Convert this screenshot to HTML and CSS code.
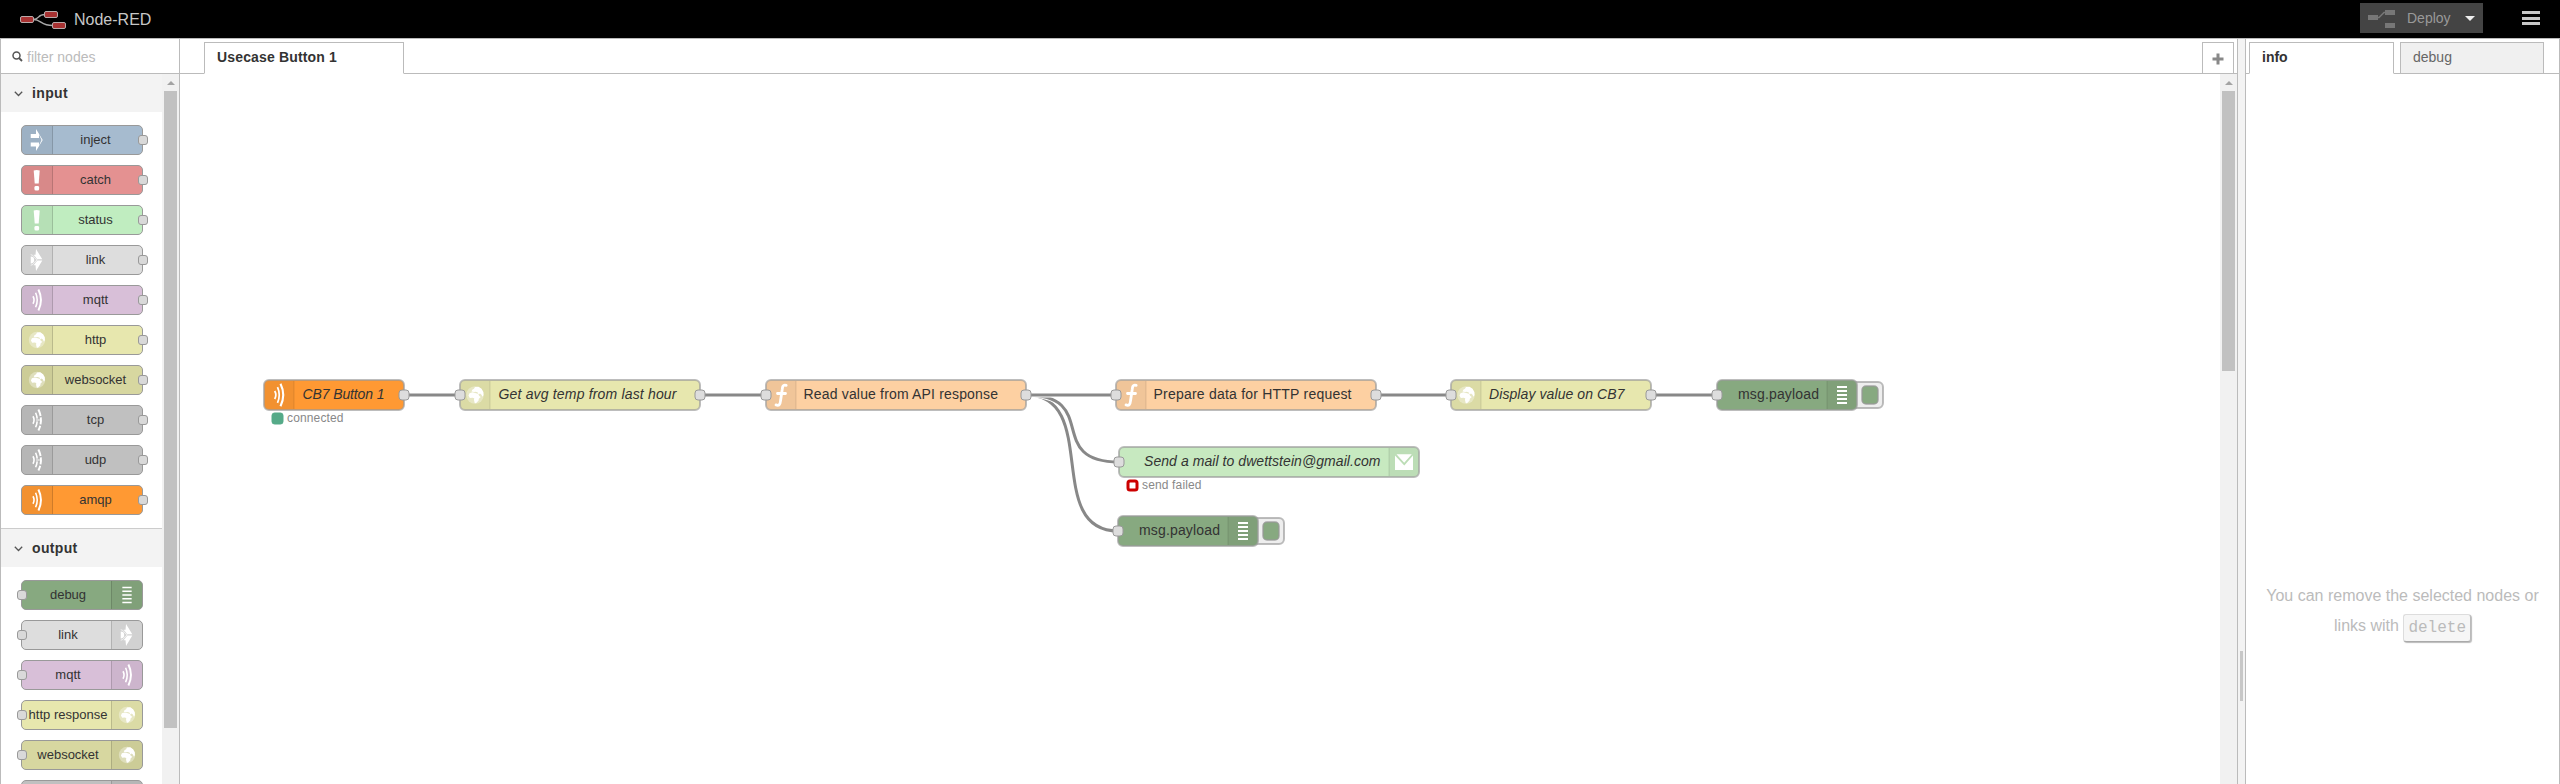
FILE: index.html
```html
<!DOCTYPE html>
<html lang="en">
<head>
<meta charset="utf-8">
<title>Node-RED</title>
<link rel="stylesheet" href="styles.css">
</head>
<body>
<svg class="defs" width="0" height="0">
  <symbol id="i-inject" viewBox="0 0 30 30"><path transform="translate(-2.100 -1.100) scale(1.070)" fill="#fff" d="M9.700 9H15V4L21.700 15L15 26V21.500H9.700V17.500H18V20.500L20.500 15L18 9.500V13H9.700Z"/></symbol>
  <symbol id="i-alert" viewBox="0 0 30 30"><g transform="translate(-1.900 -1.100) scale(1.070)"><path fill="#fff" d="M12.500 5.500Q15.500 4.500 18.500 5.500L17.500 18.500H13.500Z"/><rect x="13.200" y="21" width="4.700" height="4.500" rx="1.500" fill="#fff"/></g></symbol>
  <symbol id="i-link" viewBox="0 0 30 30"><g transform="translate(-2.100 -1.100) scale(1.070)"><path fill="#fff" d="M15 4L21.300 14.400H17C15 14 14.700 11.500 12.500 9.700H14.500ZM15 26L21.300 15.600H17C15 16 14.700 18.500 12.500 20.300H14.500ZM9.700 11.500A3.500 3.500 0 0 1 9.700 18.500Z"/><path d="M9.700 9.700C13 9.500 13.500 14.500 16.500 15C13.500 15.500 13 20.500 9.700 20.300" fill="none" stroke="#fff" stroke-width=".7"/></g></symbol>
  <symbol id="i-wave" viewBox="0 0 30 30"><g fill="none" stroke="#fff" stroke-width="1.700"><path stroke-width="2.100" d="M16.500 3.800Q22 15 16.500 26.200"/><path d="M13.500 7.200Q17 15 13.500 22.800"/><path d="M10.700 11Q13 15 10.700 19"/></g></symbol>
  <symbol id="i-bridge" viewBox="0 0 30 30"><g fill="none" stroke="#fff" stroke-width="1.700"><path stroke-width="2.100" stroke-dasharray="7.300 1.500 7.500 1.500 7.300" d="M16.500 3.800Q22 15 16.500 26.200"/><path stroke-dasharray="6.500 3 7" d="M13.500 7.200Q17 15 13.500 22.800"/><path d="M10.700 11Q13 15 10.700 19"/><path stroke-width="1.200" d="M14 15H18"/></g></symbol>
  <symbol id="i-globe" viewBox="0 0 30 30"><circle cx="15" cy="15" r="8.800" fill="#fff" opacity=".35"/><path fill="#fff" d="M11.500 11.500L12.300 9.800L14 8.800L15 7L18.500 6.700L21.500 8.800L23.300 12L23.500 15L22.500 16.800L21.300 14.500L20 13.500L18.500 14.500L17.500 12.300L15.500 11.700L14 12Z"/><path fill="#fff" d="M8.500 15.500L9.500 13.200L12.500 12.300L16 13.200L18 13.800L19.300 16L20.800 17L18.800 18.800L18.600 20.500L16 23.300L14.700 23L14 20L14.200 18.300L12.500 17.700L9.800 18Z"/></symbol>
  <symbol id="i-debug" viewBox="0 0 30 30"><path d="M10 7h10M10 11h10M10 15h10M10 19h10M10 23h10" stroke="#fff" stroke-width="1.800"/></symbol>
  <symbol id="i-function" viewBox="0 0 30 30"><path d="M20.200 5.300C16.800 4.300 16.500 6.600 16.200 9.500L14.500 21C14.200 25 12.700 25.900 10 24.900M11.500 13.500H19.500" fill="none" stroke="#fff" stroke-width="2.800" stroke-linecap="round"/></symbol>
  <symbol id="i-mail" viewBox="0 0 30 30"><path fill="#fff" d="M6 8.500V23H24V8.500L15.300 18.500ZM7.500 7.200H22.800L15.200 15.800Z"/></symbol>
</svg>

<header class="header">
  <svg class="logo" width="46" height="18" viewBox="0 0 46 18"><path d="M13 8.500C20 8.500 17 3.500 25 3.500M13 8.500C22 8.500 20 14.500 33 14.500" fill="none" stroke="#aaa" stroke-width="1.400"/><g fill="#a83232" stroke="#b9aaaa" stroke-width="1"><rect x=".5" y="5.500" width="13" height="6" rx="1.500"/><rect x="24.500" y=".5" width="13" height="6" rx="1.500"/><rect x="32.500" y="11.500" width="13" height="6" rx="1.500"/></g></svg>
  <span class="brand">Node-RED</span>
  <div class="deploy">
    <svg width="27" height="18" viewBox="0 0 27 18"><path d="M9 7.500H11L16 2.500H18" fill="none" stroke="#777" stroke-width="1.500"/><path fill="#777" d="M0 5h10v5H0zM17 0h10v5H17zM17 13h10v5H17z"/></svg>
    <span class="deploy-text">Deploy</span>
    <span class="caret"></span>
  </div>
  <div class="menu"><i></i><i></i><i></i></div>
</header>

<main class="main">
  <aside class="palette">
    <div class="search"><svg width="11" height="11" viewBox="0 0 11 11"><circle cx="4.500" cy="4.500" r="3.500" fill="none" stroke="#555" stroke-width="1.500"/><path d="M7 7L10 10" stroke="#555" stroke-width="1.800"/></svg><span>filter nodes</span></div>
    <div class="palette-body">
      <div class="categories">
        <section class="category">
          <h2><svg width="9" height="6" viewBox="0 0 9 6"><path d="M.8.800L4.500 4.500L8.200.8" fill="none" stroke="#555" stroke-width="1.300"/></svg>input</h2>
          <div class="nodes">
            <div class="node in inject"><svg><use href="#i-inject"/></svg><span>inject</span></div>
            <div class="node in catch"><svg><use href="#i-alert"/></svg><span>catch</span></div>
            <div class="node in status"><svg><use href="#i-alert"/></svg><span>status</span></div>
            <div class="node in link"><svg><use href="#i-link"/></svg><span>link</span></div>
            <div class="node in mqtt"><svg><use href="#i-wave"/></svg><span>mqtt</span></div>
            <div class="node in http"><svg><use href="#i-globe"/></svg><span>http</span></div>
            <div class="node in websocket"><svg><use href="#i-globe"/></svg><span>websocket</span></div>
            <div class="node in tcp"><svg><use href="#i-bridge"/></svg><span>tcp</span></div>
            <div class="node in tcp"><svg><use href="#i-bridge"/></svg><span>udp</span></div>
            <div class="node in amqp"><svg><use href="#i-wave"/></svg><span>amqp</span></div>
          </div>
        </section>
        <section class="category">
          <h2><svg width="9" height="6" viewBox="0 0 9 6"><path d="M.8.800L4.500 4.500L8.200.8" fill="none" stroke="#555" stroke-width="1.300"/></svg>output</h2>
          <div class="nodes">
            <div class="node out debug"><svg><use href="#i-debug"/></svg><span>debug</span></div>
            <div class="node out link"><svg><use href="#i-link"/></svg><span>link</span></div>
            <div class="node out mqtt"><svg><use href="#i-wave"/></svg><span>mqtt</span></div>
            <div class="node out http"><svg><use href="#i-globe"/></svg><span>http response</span></div>
            <div class="node out websocket"><svg><use href="#i-globe"/></svg><span>websocket</span></div>
            <div class="node out tcp"><svg><use href="#i-bridge"/></svg><span></span></div>
          </div>
        </section>
      </div>
      <div class="scrollbar"><b></b><i class="thumb palette-thumb"></i></div>
    </div>
  </aside>

  <section class="workspace">
    <div class="tabs ws-tabs">
      <div class="tab active ws-tab">Usecase Button 1</div>
      <div class="add"><svg width="12" height="12" viewBox="0 0 12 12"><path d="M6 .5V11.500M.5 6H11.500" stroke="#888" stroke-width="3"/></svg></div>
    </div>
    <div class="ws-body">
      <svg class="chart" width="2040" height="710" viewBox="180 74 2040 710">
        <path class="wire-back" d="M1026 395C1101 395 1043 531 1118 531"/>
        <path class="wire" d="M1026 395C1101 395 1043 531 1118 531"/>
        <path class="wire-back" d="M1026 395C1101 395 1044 462 1119 462"/>
        <path class="wire" d="M1026 395C1101 395 1044 462 1119 462"/>
        <path class="wire-back" d="M404 395H460M700 395H766M1026 395H1116M1376 395H1451M1651 395H1717"/>
        <path class="wire" d="M404 395H460M700 395H766M1026 395H1116M1376 395H1451M1651 395H1717"/>

        <g transform="translate(264 380)">
          <rect class="box" width="140" height="30" rx="5" fill="#ff9933"/>
          <path class="shade" d="M5 1H30V29H5Q1 29 1 25V5Q1 1 5 1Z"/><path class="divider" d="M30 1V29"/>
          <use href="#i-wave" width="30" height="30"/>
          <text class="label italic" x="38.500" y="19" textLength="82">CB7 Button 1</text>
          <rect class="port" x="135" y="10" width="10" height="10" rx="3"/>
          <rect x="8" y="33" width="11" height="11" rx="2.500" fill="#5a8" stroke="#5a8"/>
          <text class="state" x="23" y="42" textLength="56.500">connected</text>
        </g>
        <g transform="translate(460 380)">
          <rect class="box" width="240" height="30" rx="5" fill="#e7e7ae"/>
          <path class="shade" d="M5 1H30V29H5Q1 29 1 25V5Q1 1 5 1Z"/><path class="divider" d="M30 1V29"/>
          <use href="#i-globe" width="30" height="30"/>
          <text class="label italic" x="38.500" y="19" textLength="178">Get avg temp from last hour</text>
          <rect class="port" x="-5" y="10" width="10" height="10" rx="3"/><rect class="port" x="235" y="10" width="10" height="10" rx="3"/>
        </g>
        <g transform="translate(766 380)">
          <rect class="box" width="260" height="30" rx="5" fill="#fdd0a2"/>
          <path class="shade" d="M5 1H30V29H5Q1 29 1 25V5Q1 1 5 1Z"/><path class="divider" d="M30 1V29"/>
          <use href="#i-function" width="30" height="30"/>
          <text class="label" x="37.500" y="19" textLength="194.500">Read value from API response</text>
          <rect class="port" x="-5" y="10" width="10" height="10" rx="3"/><rect class="port" x="255" y="10" width="10" height="10" rx="3"/>
        </g>
        <g transform="translate(1116 380)">
          <rect class="box" width="260" height="30" rx="5" fill="#fdd0a2"/>
          <path class="shade" d="M5 1H30V29H5Q1 29 1 25V5Q1 1 5 1Z"/><path class="divider" d="M30 1V29"/>
          <use href="#i-function" width="30" height="30"/>
          <text class="label" x="37.500" y="19" textLength="198">Prepare data for HTTP request</text>
          <rect class="port" x="-5" y="10" width="10" height="10" rx="3"/><rect class="port" x="255" y="10" width="10" height="10" rx="3"/>
        </g>
        <g transform="translate(1451 380)">
          <rect class="box" width="200" height="30" rx="5" fill="#e7e7ae"/>
          <path class="shade" d="M5 1H30V29H5Q1 29 1 25V5Q1 1 5 1Z"/><path class="divider" d="M30 1V29"/>
          <use href="#i-globe" width="30" height="30"/>
          <text class="label italic" x="38" y="19" textLength="135.500">Display value on CB7</text>
          <rect class="port" x="-5" y="10" width="10" height="10" rx="3"/><rect class="port" x="195" y="10" width="10" height="10" rx="3"/>
        </g>
        <g transform="translate(1119 447)">
          <rect class="box" width="300" height="30" rx="5" fill="#c7e9c0"/>
          <path class="shade" d="M270 1H295Q299 1 299 5V25Q299 29 295 29H270Z"/><path class="divider" d="M270 1V29"/>
          <use href="#i-mail" x="270" width="30" height="30"/>
          <text class="label italic" x="25" y="19" textLength="236.500">Send a mail to dwettstein@gmail.com</text>
          <rect class="port" x="-5" y="10" width="10" height="10" rx="3"/>
          <rect x="9" y="34" width="9" height="9" rx="2" fill="#fff" stroke="#c00" stroke-width="3"/>
          <text class="state" x="23" y="42" textLength="59.500">send failed</text>
        </g>
        <g transform="translate(1717 380)">
          <rect class="button" x="120" y="2" width="46" height="26" rx="5"/>
          <rect class="button-inner" x="145" y="6" width="16" height="18" rx="4"/>
          <rect class="box" width="140" height="30" rx="5" fill="#87a980"/>
          <path class="shade" d="M110 1H135Q139 1 139 5V25Q139 29 135 29H110Z"/><path class="divider" d="M110 1V29"/>
          <use href="#i-debug" x="110" width="30" height="30"/>
          <text class="label" x="21" y="19" textLength="81">msg.payload</text>
          <rect class="port" x="-5" y="10" width="10" height="10" rx="3"/>
        </g>
        <g transform="translate(1118 516)">
          <rect class="button" x="120" y="2" width="46" height="26" rx="5"/>
          <rect class="button-inner" x="145" y="6" width="16" height="18" rx="4"/>
          <rect class="box" width="140" height="30" rx="5" fill="#87a980"/>
          <path class="shade" d="M110 1H135Q139 1 139 5V25Q139 29 135 29H110Z"/><path class="divider" d="M110 1V29"/>
          <use href="#i-debug" x="110" width="30" height="30"/>
          <text class="label" x="21" y="19" textLength="81">msg.payload</text>
          <rect class="port" x="-5" y="10" width="10" height="10" rx="3"/>
        </g>
      </svg>
      <div class="scrollbar"><b></b><i class="thumb ws-thumb"></i></div>
    </div>
  </section>

  <div class="separator"><i></i></div>

  <aside class="sidebar">
    <div class="tabs side-tabs">
      <div class="tab active info-tab">info</div>
      <div class="tab debug-tab">debug</div>
    </div>
    <p class="tip">You can remove the selected nodes or<br>links with <kbd>delete</kbd></p>
  </aside>
</main>
</body>
</html>
```
FILE: styles.css
```css
*, *::after { box-sizing: border-box; }
body { margin: 0; width: 2560px; height: 784px; overflow: hidden; background: #fff; color: #333; font: 14px "Liberation Sans", Arial, sans-serif; display: flex; flex-direction: column; }
.defs { position: absolute; }
svg { display: block; flex: none; }

.header { height: 38px; flex: none; background: #000; display: flex; align-items: flex-start; padding: 0 20px; }
.logo { margin-top: 11px; }
.brand { margin: 10px auto 0 8px; font-size: 16px; line-height: 19px; color: #c7c7c7; }
.deploy { width: 123px; height: 30px; margin: 3px 39px 0 0; padding: 0 8px; background: #444; display: flex; align-items: center; }
.deploy > svg { margin-top: 1px; }
.deploy-text { margin-left: 12px; font-size: 14px; color: #999; }
.caret { margin: 0 0 0 auto; border: 5px solid transparent; border-top-color: #eee; border-bottom: 0; }
.menu { width: 18px; height: 14px; margin-top: 11px; display: flex; flex-direction: column; justify-content: space-between; }
.menu i { height: 3px; background: #c7c7c7; }

.main { flex: 1; min-height: 0; display: flex; }
.palette { width: 180px; border: solid #bbb; border-width: 1px 1px 0; display: flex; flex-direction: column; }
.search { height: 35px; flex: none; border-bottom: 1px solid #bbb; display: flex; align-items: center; gap: 4px; padding-left: 11px; color: #bbb; }
.search span { padding-top: 2px; }
.palette-body { flex: 1; min-height: 0; display: flex; }
.categories { width: 161px; overflow: hidden; }
.category { border-bottom: 1px solid #ccc; }
.category h2 { margin: 0; height: 38px; padding-left: 13px; display: flex; align-items: center; gap: 9px; background: #f3f3f3; font-size: 14px; letter-spacing: .35px; }
.category h2 svg { margin-top: 2px; }
.nodes { padding: 13px 0 13px 20px; display: flex; flex-direction: column; gap: 10px; }
.node { position: relative; width: 122px; height: 30px; border: 1px solid #999; border-radius: 5px; display: flex; font-size: 13px; line-height: 27px; }
.node svg { width: 31px; height: 28px; background: rgba(0,0,0,.05); border-right: 1px solid rgba(0,0,0,.15); border-radius: 4px 0 0 4px; }
.node span { flex: 1; text-align: center; white-space: nowrap; padding-right: 4px; }
.node.out { flex-direction: row-reverse; }
.node.out svg { border-right: 0; border-left: 1px solid rgba(0,0,0,.15); border-radius: 0 4px 4px 0; }
.node.out span { padding: 0 0 0 3px; }
.node::after { content: ""; position: absolute; top: 9px; width: 10px; height: 10px; border: 1px solid #999; border-radius: 3px; background: #d9d9d9; }
.node.in::after { right: -6px; }
.node.out::after { left: -5px; }
.inject { background: #a6bbcf; }
.catch { background: #e49191; }
.status { background: #c0edc0; }
.link { background: #ddd; }
.mqtt { background: #d8bfd8; }
.http { background: #e7e7ae; }
.websocket { background: #d7d7a0; }
.tcp { background: silver; }
.amqp { background: #ff9933; }
.debug { background: #87a980; }

.scrollbar { width: 17px; flex: none; background: #f1f1f1; display: flex; flex-direction: column; align-items: center; }
.scrollbar b { margin: 7px 0 6px; border: 4px solid transparent; border-top: 0; border-bottom-color: #a3a3a3; }
.thumb { width: 13px; background: #c1c1c1; }
.palette-thumb { height: 637px; }
.ws-thumb { height: 280px; }

.workspace { width: 2058px; border: solid #bbb; border-width: 1px 1px 0 0; display: flex; flex-direction: column; }
.tabs { height: 35px; flex: none; display: flex; align-items: flex-start; box-shadow: inset 0 -1px #bbb; }
.tab { height: 32px; margin-top: 3px; padding: 6px 12px 0; border: 1px solid #bbb; line-height: 16px; background: #f0f0f0; color: #666; }
.tab.active { border-bottom-color: #fff; background: #fff; color: #333; font-weight: bold; }
.ws-tabs { padding: 0 3px 0 24px; }
.ws-tab { width: 200px; letter-spacing: .15px; }
.add { width: 32px; height: 32px; margin: 3px 0 0 auto; border: 1px solid #bbb; padding: 10px 9px; }
.ws-body { flex: 1; min-height: 0; display: flex; }
.box { stroke: #999; stroke-opacity: .65; stroke-width: 2; }
.shade { fill: #000; fill-opacity: .05; }
.divider { stroke: #000; stroke-opacity: .1; }
.port { fill: #ddd; stroke: #999; }
.label { font-size: 14px; fill: #333; }
.italic { font-style: italic; }
.state { font-size: 12px; fill: #888; }
.button { fill: #eee; stroke: #999; stroke-opacity: .65; stroke-width: 2; }
.button-inner { fill: #87a980; stroke: #999; stroke-opacity: .8; stroke-width: 1.5; }
.wire { fill: none; stroke: #888; stroke-width: 3; }
.wire-back { fill: none; stroke: #fff; stroke-width: 5; }

.separator { width: 7px; background: #f3f3f3; border-top: 1px solid #bbb; display: flex; flex-direction: column; padding: 612px 2px 0; }
.separator i { height: 50px; width: 3px; background: #c7c7c7; }
.sidebar { width: 315px; border: solid #bbb; border-width: 1px 1px 0; }
.side-tabs { padding-left: 3px; gap: 6px; }
.info-tab { width: 145px; }
.debug-tab { width: 144px; }
.tip { margin: 507px 0 0; text-align: center; font-size: 16px; line-height: 30px; color: #bbb; }
.tip kbd { display: inline-block; height: 28px; margin-top: 2px; padding: 0 4px; border: 1px solid #ddd; border-right-color: #bbb; border-bottom-color: #aaa; border-radius: 3px; background: #f6f6f6; box-shadow: 1px 1px 1px #bbb; font: 16px/26px "Liberation Mono", "Courier New", monospace; vertical-align: middle; }
```
